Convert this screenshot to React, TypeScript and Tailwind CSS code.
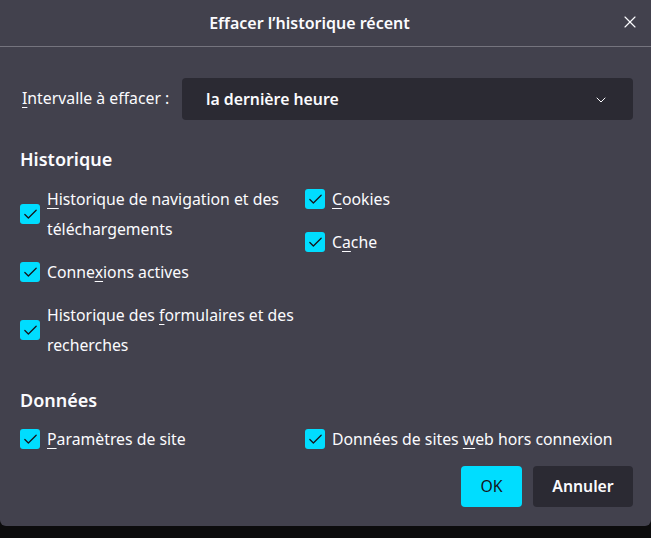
import { X, ChevronDown, Check } from "lucide-react";
import type { ReactNode } from "react";

type Item = { label: ReactNode };

function Box() {
  return (
    <span className="flex h-5 w-5 shrink-0 items-center justify-center rounded-[3px] bg-[#00ddff]">
      <Check className="h-[17px] w-[17px] text-[#15141a]" strokeWidth={1.8} />
    </span>
  );
}

function CheckRow({ label }: Item) {
  return (
    <label className="flex items-center gap-[7px] leading-[30px]">
      <Box />
      <span className="max-w-[256px]">{label}</span>
    </label>
  );
}

const Key = ({ children }: { children: ReactNode }) => (
  <u className="underline-offset-[3px] decoration-1">{children}</u>
);

export default function App() {
  return (
    <div className="h-[538px] w-[651px] bg-[#0c0c0d] font-['Noto_Sans',sans-serif] text-[15.8px] text-[#fbfbfe]">
      <div className="flex h-[526px] flex-col rounded-b-[6px] bg-[#42414d]">
        <header className="relative flex h-[47px] items-center justify-center border-b border-[#75747e] pr-[32px]">
          <h1 className="text-[16px] font-semibold">Effacer l’historique récent</h1>
          <button className="absolute right-[11px] top-[12px] text-[#fbfbfe]">
            <X className="h-[20px] w-[20px]" strokeWidth={1.4} />
          </button>
        </header>

        <main className="flex flex-1 flex-col pl-[20px] pr-[18px]">
          <div className="mt-[31px] flex items-center">
            <span className="ml-[2px] w-[160px]">
              <Key>I</Key>ntervalle à effacer :
            </span>
            <div className="flex h-[42px] flex-1 items-center justify-between rounded-[4px] bg-[#2b2a33] pl-[24px] pr-[24px] pt-[2px]">
              <span className="font-semibold">la dernière heure</span>
              <ChevronDown className="h-4 w-4" strokeWidth={1.5} />
            </div>
          </div>

          <h2 className="mt-[27px] text-[18px] font-semibold leading-[24px]">Historique</h2>
          <div className="mt-[13px] grid grid-cols-[285px_1fr]">
            <div className="flex flex-col gap-[13px]">
              <CheckRow label={<><Key>H</Key>istorique de navigation et des téléchargements</>} />
              <CheckRow label={<>Conne<Key>x</Key>ions actives</>} />
              <CheckRow label={<>Historique des <Key>f</Key>ormulaires et des recherches</>} />
            </div>
            <div className="flex flex-col gap-[13px]">
              <CheckRow label={<><Key>C</Key>ookies</>} />
              <CheckRow label={<>C<Key>a</Key>che</>} />
            </div>
          </div>

          <h2 className="mt-[28px] text-[18px] font-semibold leading-[24px]">Données</h2>
          <div className="mt-[12px] grid grid-cols-[285px_1fr]">
            <CheckRow label={<><Key>P</Key>aramètres de site</>} />
            <label className="flex items-center gap-[7px] leading-[30px]">
              <Box />
              <span>Données de sites <Key>w</Key>eb hors connexion</span>
            </label>
          </div>

          <div className="mt-[12px] flex justify-end gap-[11px]">
            <button className="h-[41px] w-[61px] rounded-[4px] bg-[#00ddff] text-[#15141a]">OK</button>
            <button className="h-[41px] w-[100px] rounded-[4px] bg-[#2b2a33] font-semibold">Annuler</button>
          </div>
        </main>
      </div>
    </div>
  );
}
